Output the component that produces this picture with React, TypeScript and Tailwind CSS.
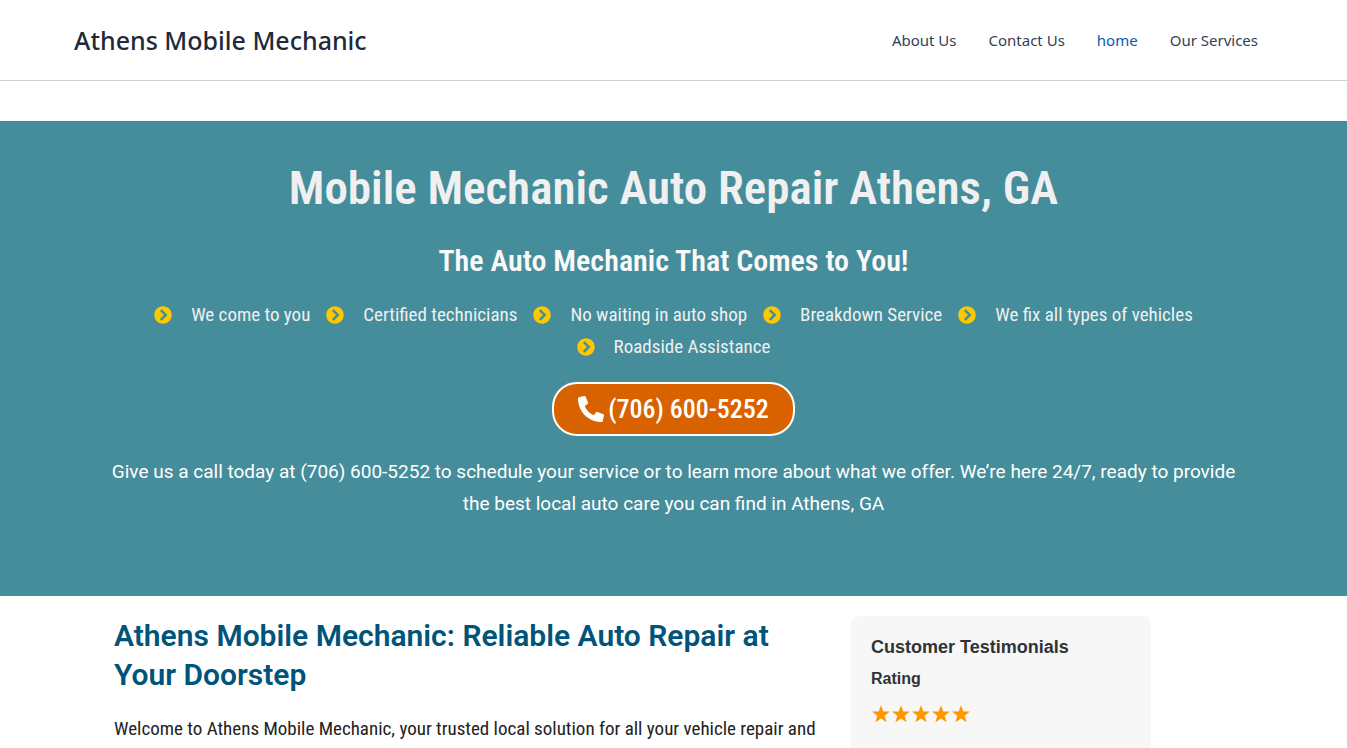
import React from "react";
import { FaPhoneAlt, FaChevronCircleRight } from "react-icons/fa";

const nav = ["About Us", "Contact Us", "home", "Our Services"];

const features = [
  "We come to you",
  "Certified technicians",
  "No waiting in auto shop",
  "Breakdown Service",
  "We fix all types of vehicles",
  "Roadside Assistance",
];

function Star() {
  return (
    <svg viewBox="0 0 20 20" className="size-5" fill="currentColor" aria-hidden="true">
      <path d="M10 2.2 L12.3 8.6 H18.9 L13.7 12.8 L15.6 19.2 L10 15.5 L4.4 19.2 L6.3 12.8 L1.1 8.6 H7.7 Z" />
    </svg>
  );
}

function Header() {
  return (
    <header className="flex items-center justify-between border-b border-[#d1d1d9] py-5 pr-[89px] pl-[74px] font-['Noto_Sans',sans-serif]">
      <a href="#" className="text-[25px] leading-10 font-medium text-[#1e293b]">
        Athens Mobile Mechanic
      </a>
      <nav className="flex gap-8 text-[15px]">
        {nav.map((n) => (
          <a key={n} href="#" className={n === "home" ? "text-[#045cb4]" : "text-[#334155]"}>
            {n}
          </a>
        ))}
      </nav>
    </header>
  );
}

function Hero() {
  return (
    <section className="mt-10 flex flex-col items-center bg-[#458d9b] px-[104px] pt-10 pb-[76px] text-center text-white">
      <h1 className="font-['Roboto_Condensed',Roboto,sans-serif] text-[47px] leading-[54px] font-semibold text-[#f0f0f0]">
        Mobile Mechanic Auto Repair Athens, GA
      </h1>
      <h2 className="mt-6 font-['Roboto_Condensed',Roboto,sans-serif] text-[30px] leading-[44px] font-semibold text-[#f9f9f9]">
        The Auto Mechanic That Comes to You!
      </h2>
      <ul className="mt-4 flex flex-wrap justify-center gap-x-4 font-['Roboto_Condensed',Roboto,sans-serif] text-[19px] leading-[32px] text-[#f0f0f0]">
        {features.map((f) => (
          <li key={f} className="flex items-center gap-[19px]">
            <FaChevronCircleRight className="text-[18px] text-[#fdc800]" />
            {f}
          </li>
        ))}
      </ul>
      <a
        href="tel:7066005252"
        className="mt-[19px] flex items-center gap-1 rounded-[25px] border-2 border-white bg-[#d96200] px-6 font-['Roboto_Condensed',Roboto,sans-serif] text-[26px] leading-[50px] font-medium"
      >
        <FaPhoneAlt />
        (706) 600-5252
      </a>
      <p className="mt-5 font-[Roboto,sans-serif] text-[19px] leading-8">
        Give us a call today at (706) 600-5252 to schedule your service or to learn more about what we offer. We’re
        here 24/7, ready to provide the best local auto care you can find in Athens, GA
      </p>
    </section>
  );
}

export default function App() {
  return (
    <div className="h-screen overflow-hidden bg-white">
      <Header />
      <Hero />
      <main className="flex justify-between gap-5 pt-5 pr-[196px] pl-[114px]">
        <article className="flex-1">
          <h2 className="font-[Roboto,sans-serif] text-[30px] leading-[39px] font-semibold text-[#00547a]">
            Athens Mobile Mechanic: Reliable Auto Repair at Your Doorstep
          </h2>
          <p className="mt-[19px] font-['Roboto_Condensed',Roboto,sans-serif] text-[19px] leading-8 text-[#222]">
            Welcome to Athens Mobile Mechanic, your trusted local solution for all your vehicle repair and
          </p>
        </article>
        <aside className="w-[300px] rounded-lg bg-[#f7f7f7] px-5 pt-[19px] pb-10 font-['Liberation_Sans',sans-serif] text-[#2f3336]">
          <h3 className="text-[18px] leading-6 font-bold">Customer Testimonials</h3>
          <h4 className="mt-2 text-[16px] leading-6 font-bold">Rating</h4>
          <div className="mt-3 flex text-[#ff9800]" role="img" aria-label="5 out of 5 stars">
            {[0, 1, 2, 3, 4].map((i) => (
              <Star key={i} />
            ))}
          </div>
        </aside>
      </main>
    </div>
  );
}
